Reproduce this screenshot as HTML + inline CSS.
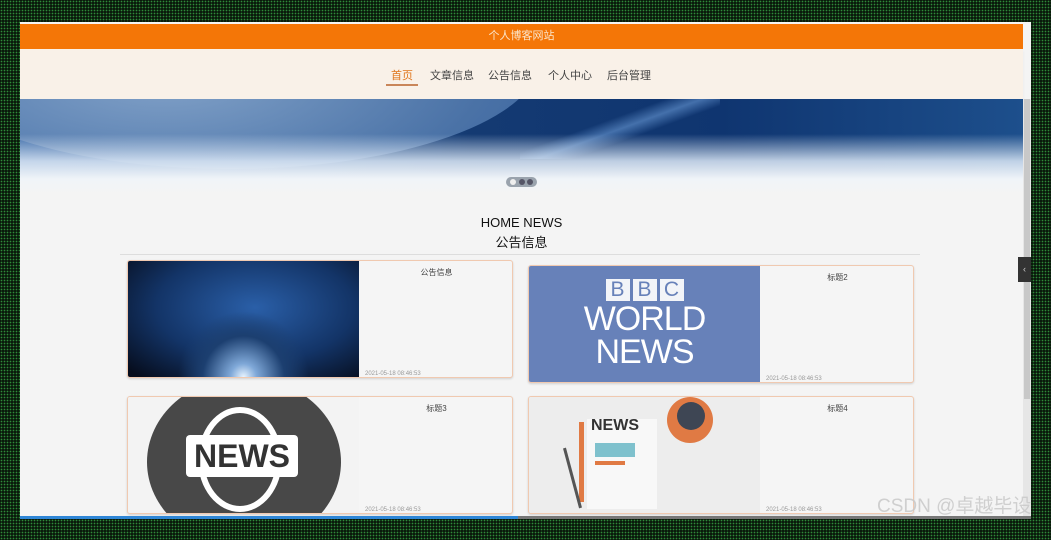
<!DOCTYPE html>
<html><head><meta charset="utf-8"><style>
*{margin:0;padding:0;box-sizing:border-box}
body{width:1051px;height:540px;overflow:hidden;position:relative;font-family:"Liberation Sans","Noto Sans CJK SC",sans-serif;
background-color:#0a1a0c;background-image:radial-gradient(#2f8a3a 35%,transparent 40%);background-size:3px 3px}
#win{position:absolute;left:20px;top:22px;width:1011px;height:497px;background:#f4f4f4;overflow:hidden}
#top{position:absolute;left:0;top:2px;width:1003px;height:25px;background:#f47607;color:#fbe6cc;font-size:11px;text-align:center;line-height:25px}
#nav{position:absolute;left:0;top:27px;width:1003px;height:50px;background:#f9f1e8;box-shadow:0 2px 3px rgba(0,0,0,.05)}
#nav span{position:absolute;top:18px;font-size:11px;color:#444}
#banner{position:absolute;left:0;top:77px;width:1003px;height:95px;overflow:hidden;
background:linear-gradient(90deg,#3b6aa8 0%,#2a5a96 25%,#143a72 45%,#0f3570 70%,#1d4f8c 100%)}
#scroll{position:absolute;left:1003px;top:77px;width:8px;height:420px;background:#e6e6e6}
.card{position:absolute;width:386px;height:118px;background:#f5f5f5;border:1px solid #f0c9b0;border-radius:3px;box-shadow:0 1px 2px rgba(0,0,0,.15);overflow:hidden}
.card .img{position:absolute;left:0;top:0;width:231px;height:116px}
.card .t{position:absolute;left:231px;width:155px;top:6px;text-align:center;font-size:8px;color:#444}
.card .d{position:absolute;left:237px;bottom:0px;font-size:6px;color:#999}
.bb{background:#f2f4f8;color:#6781b9;width:24px;height:22px;font-size:21px;line-height:22px}
</style></head><body>
<div id="win">
<div id="top">个人博客网站</div>
<div id="nav">
<span style="left:371px;color:#e0761c">首页</span>
<div style="position:absolute;left:366px;top:35px;width:32px;height:2px;background:#c9865a"></div>
<span style="left:410px">文章信息</span>
<span style="left:468px">公告信息</span>
<span style="left:528px">个人中心</span>
<span style="left:587px">后台管理</span>
</div>
<div id="banner">
<div style="position:absolute;left:-100px;top:-150px;width:620px;height:220px;border-radius:50%;background:radial-gradient(ellipse at 40% 60%,#8aa8cc,#5078ac 60%,#3560a0);opacity:.9"></div>
<div style="position:absolute;left:500px;top:0;width:200px;height:60px;background:linear-gradient(160deg,transparent 40%,rgba(120,170,230,.5) 50%,transparent 60%)"></div>
<div style="position:absolute;left:0;top:35px;width:1003px;height:60px;background:linear-gradient(180deg,rgba(230,238,248,0) 0%,rgba(220,232,246,.85) 45%,#f0f4f8 75%,#f4f4f4 100%)"></div>
<div style="position:absolute;left:486px;top:78px;width:31px;height:10px;border-radius:5px;background:#9aa3ad"></div>
<div style="position:absolute;left:490px;top:80px;width:6px;height:6px;border-radius:3px;background:#eee"></div>
<div style="position:absolute;left:499px;top:80px;width:6px;height:6px;border-radius:3px;background:#556"></div>
<div style="position:absolute;left:507px;top:80px;width:6px;height:6px;border-radius:3px;background:#556"></div>
</div>
<div id="scroll"><div style="position:absolute;left:1px;top:0;width:6px;height:300px;background:#c8c8c8"></div></div>
<div style="position:absolute;left:998px;top:235px;width:13px;height:25px;background:#333;color:#ccc;font-size:9px;line-height:25px;text-align:center">‹</div>
<div style="position:absolute;left:0;width:1003px;top:193px;text-align:center;font-size:13px;color:#111">HOME NEWS</div>
<div style="position:absolute;left:0;width:1003px;top:210px;text-align:center;font-size:13px;color:#111">公告信息</div>
<div style="position:absolute;left:100px;top:232px;width:800px;height:1px;background:#ddd"></div>

<div class="card" style="left:107px;top:238px">
<div class="img" style="background:radial-gradient(ellipse at 50% 100%,#e8f4ff 0,#7fa8d8 8%,#1c3f70 25%,transparent 40%),radial-gradient(ellipse at 55% 40%,#2a5fa8,#133467 55%,#060d1d 95%)"></div>
<div class="t">公告信息</div><div class="d">2021-05-18 08:46:53</div></div>

<div class="card" style="left:508px;top:243px">
<div class="img" style="background:#6781b9;color:#fff;text-align:center">
<div style="margin-top:13px;display:flex;justify-content:center;gap:3px">
<span class="bb">B</span><span class="bb">B</span><span class="bb">C</span></div>
<div style="font-size:34px;line-height:33px;margin-top:2px;letter-spacing:-1px">WORLD<br>NEWS</div></div>
<div class="t">标题2</div><div class="d">2021-05-18 08:46:53</div></div>

<div class="card" style="left:107px;top:374px">
<div class="img" style="background:#f3f3f3"><div style="position:absolute;left:19px;top:-20px;width:194px;height:170px;border-radius:50%;background:#484848"></div>
<div style="position:absolute;left:70px;top:10px;width:84px;height:105px;border-radius:50%;border:6px solid #fff"></div>
<div style="position:absolute;left:58px;top:38px;width:112px;height:42px;background:#fff;border-radius:4px;color:#333;font-weight:bold;font-size:32px;line-height:42px;text-align:center">NEWS</div></div>
<div class="t">标题3</div><div class="d">2021-05-18 08:46:53</div></div>

<div class="card" style="left:508px;top:374px">
<div class="img" style="background:#ededed">
<div style="position:absolute;left:58px;top:22px;width:70px;height:90px;background:#f8f8f8"></div>
<div style="position:absolute;left:50px;top:25px;width:5px;height:80px;background:#e07a44"></div>
<div style="position:absolute;left:62px;top:20px;font-size:16px;font-weight:bold;color:#333">NEWS</div>
<div style="position:absolute;left:66px;top:46px;width:40px;height:14px;background:#7fc1cd"></div>
<div style="position:absolute;left:66px;top:64px;width:30px;height:4px;background:#e07a44"></div>
<div style="position:absolute;left:138px;top:0px;width:46px;height:46px;border-radius:50%;background:#e07a44"></div>
<div style="position:absolute;left:148px;top:5px;width:28px;height:28px;border-radius:50%;background:#3e4654"></div>
<div style="position:absolute;left:42px;top:50px;width:3px;height:62px;background:#555;transform:rotate(-15deg)"></div></div>
<div class="t">标题4</div><div class="d">2021-05-18 08:46:53</div></div>

<div style="position:absolute;left:0;top:494px;width:498px;height:3px;background:#2f86d6"></div>
<div style="position:absolute;left:498px;top:494px;width:513px;height:3px;background:#777"></div>
<div style="position:absolute;left:857px;top:469px;font-size:19px;color:rgba(200,200,200,.85);white-space:nowrap">CSDN @卓越毕设</div>
</div>
</body></html>
